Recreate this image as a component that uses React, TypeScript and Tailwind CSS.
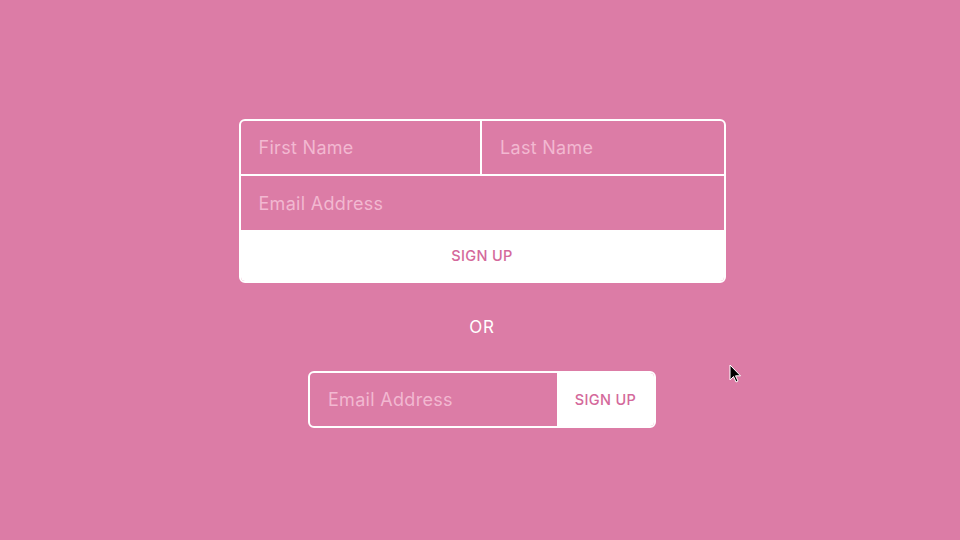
export default function App() {
  const font = { fontFamily: '"Inter", "Open Sans", sans-serif' };

  return (
    <div
      className="relative min-h-screen w-full bg-[#dc7ca6] overflow-hidden"
      style={font}
    >
      <div className="flex flex-col items-center pt-[119px] pl-1">
        {/* full form */}
        <div className="w-[487px] border-2 border-white rounded-md overflow-hidden flex flex-col">
          <div className="flex h-[55px] border-b-2 border-white">
            <input
              className="w-1/2 h-full bg-transparent pl-[18px] text-[18px] tracking-[0.3px] outline-none border-r-2 border-white text-white placeholder:text-[#f2b8d1]"
              placeholder="First Name"
            />
            <input
              className="w-1/2 h-full bg-transparent pl-[18px] text-[18px] tracking-[0.3px] outline-none text-white placeholder:text-[#f2b8d1]"
              placeholder="Last Name"
            />
          </div>
          <input
            className="h-[54px] bg-transparent pl-[18px] text-[18px] tracking-[0.3px] outline-none text-white placeholder:text-[#f2b8d1]"
            placeholder="Email Address"
          />
          <button className="h-[51px] bg-white text-[#d4699b] text-[14.5px] font-medium tracking-wide">
            SIGN UP
          </button>
        </div>

        <div className="mt-[34px] h-5 text-[17px] leading-5 text-white tracking-wider">OR</div>

        {/* inline form */}
        <div className="mt-[34px] flex h-[57px] w-[348px] rounded-md overflow-hidden border-2 border-white">
          <input
            className="flex-1 min-w-0 h-full bg-transparent pl-[18px] text-[18px] tracking-[0.3px] outline-none text-white placeholder:text-[#f2b8d1]"
            placeholder="Email Address"
          />
          <button className="w-[97px] h-full bg-white text-[#d4699b] text-[14.5px] font-medium tracking-wide">
            SIGN UP
          </button>
        </div>
      </div>

      {/* mouse pointer */}
      <svg
        className="absolute left-[729px] top-[364px]"
        width="14"
        height="20"
        viewBox="0 0 14 20"
      >
        <path
          d="M1 1 L1 16 L4.5 12.5 L7 18 L9 17 L6.5 11.8 L11.5 11.8 Z"
          fill="#000"
          stroke="#fff"
          strokeWidth="1"
          strokeLinejoin="round"
        />
      </svg>
    </div>
  );
}
